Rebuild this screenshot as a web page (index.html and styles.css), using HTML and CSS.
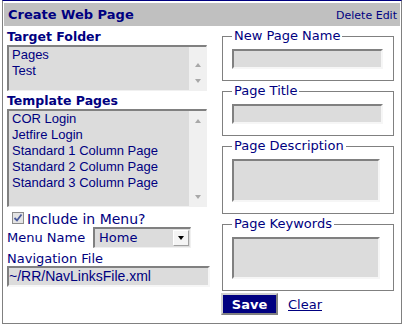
FILE: index.html
```html
<!DOCTYPE html>
<html lang="en">
<head>
    <meta charset="UTF-8">
    <meta name="viewport" content="width=device-width, initial-scale=1.0">
    <title>Create Web Page</title>
    <link rel="stylesheet" href="styles.css">
</head>
<body>
<div class="panel">
    <div class="panel-head">
        <span class="panel-title">Create Web Page</span>
        <span class="panel-actions"><a href="#">Delete</a> <a href="#">Edit</a></span>
    </div>
    <div class="panel-body">
        <div class="col-left">
            <div class="field-label">Target Folder</div>
            <div class="listbox listbox-folders">
                <ul class="list-items">
                    <li>Pages</li>
                    <li>Test</li>
                </ul>
                <div class="scroll-track">
                    <span class="arrow arrow-up"></span>
                    <span class="arrow arrow-down"></span>
                </div>
            </div>

            <div class="field-label second">Template Pages</div>
            <div class="listbox listbox-templates">
                <ul class="list-items">
                    <li>COR Login</li>
                    <li>Jetfire Login</li>
                    <li>Standard 1 Column Page</li>
                    <li>Standard 2 Column Page</li>
                    <li>Standard 3 Column Page</li>
                </ul>
                <div class="scroll-track">
                    <span class="arrow arrow-up"></span>
                    <span class="arrow arrow-down"></span>
                </div>
            </div>

            <label class="check-row">
                <span class="checkbox">
                    <svg width="12" height="12" viewBox="0 0 12 12">
                        <rect x="0.5" y="0.5" width="11" height="11" fill="#e4e4e4" stroke="#8c8c8c"/>
                        <path d="M2.5 6 L5 8.5 L9.5 2.5" fill="none" stroke="#4a5a9c" stroke-width="1.8"/>
                    </svg>
                </span>
                Include in Menu?
            </label>

            <div class="menu-row">
                <span class="menu-label">Menu Name</span>
                <div class="dropdown">
                    <span class="dropdown-value">Home</span>
                    <span class="dropdown-button"><span class="caret"></span></span>
                </div>
            </div>

            <div class="nav-label">Navigation File</div>
            <div class="text-box nav-file">~/RR/NavLinksFile.xml</div>
        </div>

        <div class="col-right">
            <fieldset class="group">
                <legend>New Page Name</legend>
                <div class="text-box small"></div>
            </fieldset>
            <fieldset class="group">
                <legend>Page Title</legend>
                <div class="text-box small"></div>
            </fieldset>
            <fieldset class="group">
                <legend>Page Description</legend>
                <div class="text-box tall"></div>
            </fieldset>
            <fieldset class="group">
                <legend>Page Keywords</legend>
                <div class="text-box tall keywords"></div>
            </fieldset>
            <div class="controls">
                <button class="save-button">Save</button>
                <a href="#" class="clear-link">Clear</a>
            </div>
        </div>
    </div>
</div>
</body>
</html>
```

FILE: styles.css
```css
body {
    margin: 0;
    font-family: "DejaVu Sans", Verdana, sans-serif;
    color: #000080;
    background-color: #ffffff;
}

a {
    color: #000080;
    text-decoration: none;
}

.panel {
    box-sizing: border-box;
    width: 400px;
    height: 324px;
    margin-left: 2px;
    border: 1px solid #808080;
    border-top-color: #000080;
    padding: 2px 1px 0 1px;
}

.panel-head {
    height: 23px;
    background-color: #c0c0c0;
    display: flex;
    justify-content: space-between;
    align-items: center;
    padding: 0 3px 0 4px;
}

.panel-title {
    font-weight: bold;
    font-size: 13px;
}

.panel-actions {
    font-size: 11px;
    padding-top: 2px;
}

.panel-body {
    display: flex;
    gap: 12px;
    padding-left: 3px;
}

.col-left {
    width: 203px;
    display: flex;
    flex-direction: column;
    align-items: flex-start;
}

.col-right {
    width: 172px;
}

.field-label {
    font-weight: bold;
    font-size: 12.5px;
    line-height: 16px;
    margin-top: 3px;
}

.field-label.second {
    margin-top: 2px;
}

.listbox {
    box-sizing: border-box;
    width: 200px;
    display: flex;
    border-top: 2px solid #808080;
    border-left: 2px solid #808080;
    border-right: 1px solid #f0f0f0;
    border-bottom: 1px solid #f0f0f0;
    background-color: #dcdcdc;
}

.listbox-folders {
    height: 46px;
}

.listbox-templates {
    height: 98px;
}

.list-items {
    flex: 1;
    margin: 0;
    padding: 0 0 0 3px;
    list-style: none;
    font-family: "Liberation Sans", Arial, sans-serif;
    font-size: 13px;
    line-height: 16px;
}

.scroll-track {
    width: 17px;
    background-color: #f0f0f0;
    display: flex;
    flex-direction: column;
    justify-content: space-between;
    align-items: center;
    padding-bottom: 7px;
    box-sizing: border-box;
}

.listbox-folders .scroll-track {
    padding-top: 16px;
}

.listbox-templates .scroll-track {
    padding-top: 8px;
}

.arrow {
    width: 0;
    height: 0;
    border-left: 3.5px solid transparent;
    border-right: 3.5px solid transparent;
}

.arrow-up {
    border-bottom: 4px solid #a8a8a8;
}

.arrow-down {
    border-top: 4px solid #a8a8a8;
}

.check-row {
    display: flex;
    align-items: flex-start;
    gap: 3px;
    margin-top: 5px;
    height: 15px;
    font-size: 14px;
    line-height: 15px;
}

.checkbox {
    display: block;
    width: 12px;
    height: 12px;
    margin-left: 5px;
}

.checkbox svg {
    display: block;
}

.menu-row {
    display: flex;
    align-items: center;
    height: 21px;
    font-size: 13px;
    line-height: 16px;
}

.menu-label {
    width: 86px;
}

.dropdown {
    box-sizing: border-box;
    width: 98px;
    height: 21px;
    display: flex;
    align-items: center;
    justify-content: space-between;
    border-top: 2px solid #808080;
    border-left: 2px solid #808080;
    border-right: 1px solid #f0f0f0;
    border-bottom: 1px solid #f0f0f0;
    background-color: #dcdcdc;
    padding: 0 1px 0 4px;
}

.dropdown-value {
    font-size: 13px;
}

.dropdown-button {
    box-sizing: border-box;
    width: 16px;
    height: 16px;
    display: flex;
    align-items: center;
    justify-content: center;
    background-color: #f4f4f4;
    border: 1px solid #a0a0a0;
    border-top-color: #ffffff;
    border-left-color: #ffffff;
}

.caret {
    width: 0;
    height: 0;
    border-left: 3.5px solid transparent;
    border-right: 3.5px solid transparent;
    border-top: 4px solid #000000;
}

.nav-label {
    font-size: 13px;
    line-height: 15px;
    margin-top: 3px;
}

.text-box {
    box-sizing: border-box;
    border-top: 2px solid #808080;
    border-left: 2px solid #808080;
    border-right: 2px solid #f6f6f6;
    border-bottom: 2px solid #f6f6f6;
    background-color: #dcdcdc;
}

.nav-file {
    width: 203px;
    height: 21px;
    font-family: "Liberation Sans", Arial, sans-serif;
    font-size: 14px;
    line-height: 17px;
    padding-left: 0;
    white-space: nowrap;
}

.group {
    margin: 2px 0 0 0;
    padding: 5px 9px 11px 9px;
    border: 1px solid #808080;
    min-width: 0;
}

.group legend {
    padding: 0 2px;
    font-size: 13px;
    line-height: 16px;
}

.text-box.small {
    width: 151px;
    height: 20px;
}

.text-box.tall {
    width: 148px;
    height: 43px;
}

.text-box.tall.keywords {
    height: 42px;
}

.controls {
    display: flex;
    align-items: center;
    gap: 10px;
    margin-top: 2px;
    margin-left: -1px;
}

.save-button {
    box-sizing: border-box;
    width: 57px;
    height: 22px;
    padding: 0;
    background-color: #000080;
    color: #ffffff;
    font-family: "DejaVu Sans", Verdana, sans-serif;
    font-weight: bold;
    font-size: 13px;
    border: 2px solid;
    border-color: #d0d0d0 #808080 #808080 #d0d0d0;
    cursor: pointer;
}

.clear-link {
    font-size: 13px;
    text-decoration: underline;
}
```
